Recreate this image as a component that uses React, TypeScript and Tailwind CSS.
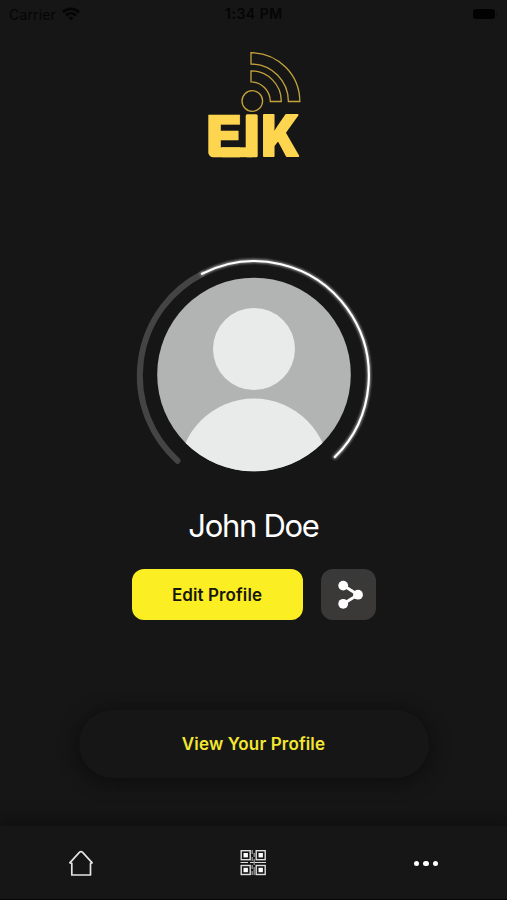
import React from "react";

function StatusBar() {
  return (
    <header className="relative flex h-7 items-center justify-between pl-[9px] pr-[10px] text-[14px] text-[#050505]">
      <div className="flex items-center gap-[6px]">
        <span className="tracking-[0.15px]">Carrier</span>
        <svg className="h-[14px] w-[18px]" viewBox="0 0 18 14" fill="none" stroke="currentColor" strokeWidth="2.8">
          <path d="M1 5.2C5.5.8 12.5.8 17 5.2" />
          <path d="M4 8.4c3-2.8 7-2.8 10 0" />
          <path d="M6.5 10.6c1.4-1.3 3.6-1.3 5 0L9 13.4z" fill="currentColor" stroke="none" />
        </svg>
      </div>
      <span className="absolute left-[225px] top-[4px] text-[14px] leading-5 font-semibold tracking-[0.5px]">1:34 PM</span>
      <div className="flex items-center gap-px">
        <div className="h-[10px] w-[22px] rounded-[3px] bg-[#020202]" />
        <div className="h-1 w-px bg-[#101010]" />
      </div>
    </header>
  );
}

function Logo() {
  return (
    <svg className="mt-[22px] h-[130px] w-[108px]" viewBox="200 50 108 130" fill="none">
      <g stroke="#c4a33c" strokeWidth="1.3">
        <path d="M251 52.7A49 48.8 0 0 1 299.8 101.5H288.4A37.5 37.5 0 0 0 251 64z" />
        <path d="M251 70.8A30.5 30.5 0 0 1 281.3 101.5H270.3A19.8 19.8 0 0 0 251 81.8z" />
        <circle cx="252.3" cy="101" r="10.3" />
      </g>
      <g fill="#fdd54f" stroke="#fdd54f" strokeLinejoin="round" className="font-['Inter'] font-black">
        <text x="206" y="156.7" fontSize="58" strokeWidth="0.6" textLength="36.2" lengthAdjust="spacingAndGlyphs">E</text>
        <text x="261.5" y="156.2" fontSize="56.5" strokeWidth="1.8" textLength="38" lengthAdjust="spacingAndGlyphs">K</text>
      </g>
      <rect x="245.7" y="114.3" width="12" height="42.9" rx="1.5" fill="#fdd54f" />
      <rect x="222" y="147.3" width="30" height="9.9" fill="#fdd54f" />
      <path d="M207 150V158.5H215.5Q208.3 157.5 207 150" fill="#161616" />
    </svg>
  );
}

function Avatar() {
  return (
    <svg className="mt-[70px] h-[230px] w-[250px]" viewBox="129 250 250 230" fill="none">
      <defs>
        <clipPath id="portrait"><circle cx="254" cy="374.5" r="96.8" /></clipPath>
        <filter id="glow" x="-10%" y="-10%" width="120%" height="120%"><feGaussianBlur stdDeviation="1" /></filter>
      </defs>
      <path d="M202.5 273.7A114.5 114.5 0 0 0 177.5 460.7" stroke="#444" strokeWidth="6" strokeLinecap="round" />
      <path d="M202 273.8A114.5 114.5 0 0 1 334.8 457.1" stroke="#858585" strokeWidth="4.3" strokeLinecap="round" filter="url(#glow)" />
      <path d="M202 273.8A114.5 114.5 0 0 1 334.8 457.1" stroke="#fff" strokeWidth="2.1" strokeLinecap="round" />
      <g clipPath="url(#portrait)">
        <rect x="157" y="277" width="195" height="195" fill="#b2b4b3" />
        <circle cx="254" cy="349" r="41" fill="#e9ebea" />
        <circle cx="254" cy="473.5" r="75" fill="#e9ebea" />
      </g>
    </svg>
  );
}

function ShareIcon() {
  return (
    <svg className="ml-[5px] h-[30px] w-[28px]" viewBox="337 580 28 30" fill="#fff">
      <path d="M343.4 585.6L358 594.7L343.4 603.8" fill="none" stroke="#fff" strokeWidth="3" />
      <circle cx="343.2" cy="585.6" r="4.9" />
      <circle cx="358" cy="594.7" r="4.9" />
      <circle cx="343.2" cy="603.8" r="4.9" />
    </svg>
  );
}

function HomeIcon() {
  return (
    <svg className="h-[28px] w-[28px]" viewBox="67 849 28 28" fill="none" stroke="#e4e4e4" strokeWidth="1.7" strokeLinejoin="round" strokeLinecap="round">
      <path d="M69.8 862.8L79.6 852.2Q81 851 82.4 852.2L92.2 862.8L90.5 863.4V875H71.8V863.4Z" />
    </svg>
  );
}

function QrIcon() {
  return (
    <svg className="h-[28px] w-[28px]" viewBox="240 850 28 28" fill="none">
      <g strokeWidth="1.4" stroke="#dedede">
        <rect x="242.2" y="851.7" width="9" height="9" />
        <rect x="257.2" y="851.7" width="9" height="9" />
        <rect x="242.2" y="866.5" width="9" height="9" />
        <rect x="257.2" y="866.5" width="9" height="9" />
        <path d="M241.5 863.5H249M251 863.5H267" strokeWidth="1.2" />
      </g>
      <g fill="#fff">
        <rect x="244.5" y="854" width="4.4" height="4.4" />
        <rect x="259.5" y="854" width="4.4" height="4.4" />
        <rect x="244.5" y="868.8" width="4.4" height="4.4" />
        <rect x="259.5" y="868.8" width="4.4" height="4.4" />
      </g>
      <path d="M253.2 851V855M255.2 854V858M253.2 858V862M255.2 860V866M253.2 866V870M255.2 868V876M253.2 872V876" strokeWidth="1.3" stroke="#999" />
    </svg>
  );
}

export default function App() {
  return (
    <div className="flex h-[900px] w-[507px] flex-col overflow-hidden bg-[#161616] font-['Inter','Liberation_Sans',sans-serif]">
      <StatusBar />
      <main className="flex flex-1 flex-col items-center">
        <Logo />
        <Avatar />
        <h1 className="mt-[26px] text-[31px] leading-10 font-normal tracking-[-1.3px] text-white">John Doe</h1>
        <div className="mt-[23px] flex gap-[18px]">
          <button className="h-[51px] w-[171px] rounded-xl bg-[#fbee23] pt-[2px] text-[17px] font-semibold tracking-[0.1px] text-[#17160a]">Edit Profile</button>
          <button aria-label="Share" className="flex h-[51px] w-[55px] items-center justify-center rounded-xl bg-linear-to-b from-[#393939] to-[#3b3937]">
            <ShareIcon />
          </button>
        </div>
        <button className="mt-[90px] h-[68px] w-[350px] rounded-[34px] bg-[#161616] pt-[2px] text-[17px] font-semibold tracking-[0.15px] text-[#f3e731] shadow-[0_3px_16px_4px_#0f0f0f]">View Your Profile</button>
      </main>
      <nav className="flex h-[74px] items-center border-b border-[#08040a] bg-[#161616] shadow-[0_-3px_14px_2px_#0f0f0f]">
        <div className="flex flex-1 justify-center pr-[8px]"><HomeIcon /></div>
        <div className="flex flex-1 justify-center pt-px pl-[2px]"><QrIcon /></div>
        <div className="flex flex-1 justify-center gap-[4.4px] pl-[11px] pt-[2px]">
          <span className="size-[5.4px] rounded-full bg-white" />
          <span className="size-[5.4px] rounded-full bg-white" />
          <span className="size-[5.4px] rounded-full bg-white" />
        </div>
      </nav>
    </div>
  );
}
